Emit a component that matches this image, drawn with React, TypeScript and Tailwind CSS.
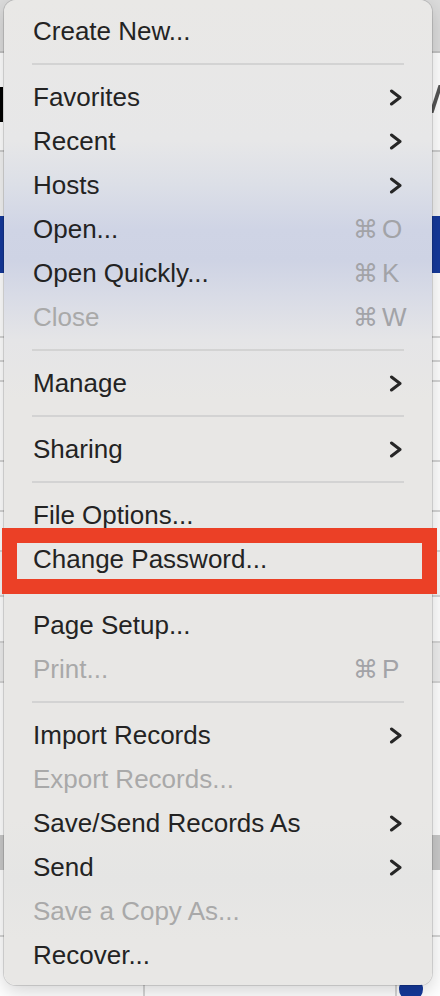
import React from "react";

type Row =
  | { type: "sep" }
  | { type: "item"; label: string; disabled?: boolean; sub?: boolean; key?: string };

const rows: Row[] = [
  { type: "item", label: "Create New..." },
  { type: "sep" },
  { type: "item", label: "Favorites", sub: true },
  { type: "item", label: "Recent", sub: true },
  { type: "item", label: "Hosts", sub: true },
  { type: "item", label: "Open...", key: "O" },
  { type: "item", label: "Open Quickly...", key: "K" },
  { type: "item", label: "Close", key: "W", disabled: true },
  { type: "sep" },
  { type: "item", label: "Manage", sub: true },
  { type: "sep" },
  { type: "item", label: "Sharing", sub: true },
  { type: "sep" },
  { type: "item", label: "File Options..." },
  { type: "item", label: "Change Password..." },
  { type: "sep" },
  { type: "item", label: "Page Setup..." },
  { type: "item", label: "Print...", key: "P", disabled: true },
  { type: "sep" },
  { type: "item", label: "Import Records", sub: true },
  { type: "item", label: "Export Records...", disabled: true },
  { type: "item", label: "Save/Send Records As", sub: true },
  { type: "item", label: "Send", sub: true },
  { type: "item", label: "Save a Copy As...", disabled: true },
  { type: "item", label: "Recover..." },
];

function Chevron() {
  return (
    <svg width="14" height="17" viewBox="0 0 14 17" fill="none" className="shrink-0">
      <polyline
        points="2.5,2 11,8.5 2.5,15"
        stroke="#262626"
        strokeWidth="3"
        strokeLinecap="round"
        strokeLinejoin="round"
      />
    </svg>
  );
}

function Background() {
  return (
    <div className="flex flex-col w-full h-full bg-white font-['Liberation_Sans',sans-serif]">
      <div className="h-[53px] shrink-0 bg-[#dcdcdc] border-b-2 border-[#c4c4c4]" />
      <div className="h-[99px] shrink-0 bg-white border-b-2 border-[#cfcfcf] flex justify-between">
        <div className="w-[3px] h-[35px] mt-[34px] bg-black" />
        <div className="w-[8px] h-[28px] mt-[32px] overflow-hidden">
          <div className="w-[4px] h-[28px] ml-[2px] bg-[#555] skew-x-[-18deg]" />
        </div>
      </div>
      <div className="h-[64px] shrink-0 bg-[#f3f3f3]" />
      <div className="h-[57px] shrink-0 bg-[#15399b]" />
      <div className="h-[65px] shrink-0 border-b-2 border-[#d6d6d6]" />
      <div className="h-[24px] shrink-0 border-b-2 border-[#d6d6d6]" />
      <div className="h-[20px] shrink-0 border-b-2 border-[#d6d6d6]" />
      <div className="h-[80px] shrink-0 border-b-2 border-[#d6d6d6]" />
      <div className="h-[50px] shrink-0 border-b-2 border-[#d6d6d6]" />
      <div className="h-[40px] shrink-0 border-b-2 border-[#d6d6d6]" />
      <div className="h-[45px] shrink-0 border-b-2 border-[#d6d6d6] bg-[#f7f7f7]" />
      <div className="h-[46px] shrink-0 border-b-2 border-[#d6d6d6]" />
      <div className="h-[40px] shrink-0 border-b-2 border-[#d6d6d6] bg-[#eeeeee]" />
      <div className="h-[152px] shrink-0 bg-white" />
      <div className="h-[35px] shrink-0 bg-[#c9c9c9]" />
      <div className="h-[67px] shrink-0 border-b-2 border-[#d6d6d6]" />
      <div className="h-[48px] shrink-0" />
      <div className="flex-1 flex">
        <div className="w-[145px] border-r-2 border-[#d6d6d6]" />
        <div className="flex-1" />
        <div className="w-[45px] border-l-2 border-[#d6d6d6] flex">
          <div className="w-[24px] h-[24px] rounded-full bg-[#15399b] mt-[-8px] ml-[2px]" />
        </div>
      </div>
    </div>
  );
}

export default function App() {
  return (
    <div className="relative w-[440px] h-[996px] overflow-hidden bg-white">
      <Background />
      <div className="absolute left-[4px] top-0 w-[428px] h-[985px] rounded-[12px] shadow-[0_0_0_1px_rgba(0,0,0,0.13),0_6px_20px_rgba(0,0,0,0.18)] bg-[linear-gradient(to_bottom,#e9e8e6_0px,#e7e7e8_140px,#dcdfe7_185px,#cfd4e5_230px,#ced3e4_260px,#d8dbe6_295px,#e5e5e7_340px,#e8e7e5_400px,#e8e7e5_820px,#e5e5e4_880px,#e8e7e5_940px)] pt-[9px] pb-[8px] font-['Liberation_Sans',sans-serif]">
        {rows.map((r, i) =>
          r.type === "sep" ? (
            <div key={i} className="h-[22px] flex items-center px-[28px]">
              <div className="h-[2px] w-full bg-[#d3d3d3]" />
            </div>
          ) : (
            <div
              key={i}
              className="h-[44px] flex items-center pl-[29px] pr-[29px] text-[26px] leading-[44px]"
            >
              <span className={"flex-1 whitespace-nowrap " + (r.disabled ? "text-[#a9a9a9]" : "text-[#232323]")}>
                {r.label}
              </span>
              {r.sub && <Chevron />}
              {r.key && (
                <div className="w-[50px] shrink-0 flex items-center text-[#a2a3a7] whitespace-nowrap">
                  <span className="w-[29px] shrink-0 text-[25px] font-['DejaVu_Sans',sans-serif] leading-none">⌘</span>
                  <span className="text-[26px] leading-none">{r.key}</span>
                </div>
              )}
            </div>
          )
        )}
      </div>
      <div className="absolute left-[2px] top-[528px] w-[435px] h-[66px] border-[15px] border-[#eb4026]" />
    </div>
  );
}
